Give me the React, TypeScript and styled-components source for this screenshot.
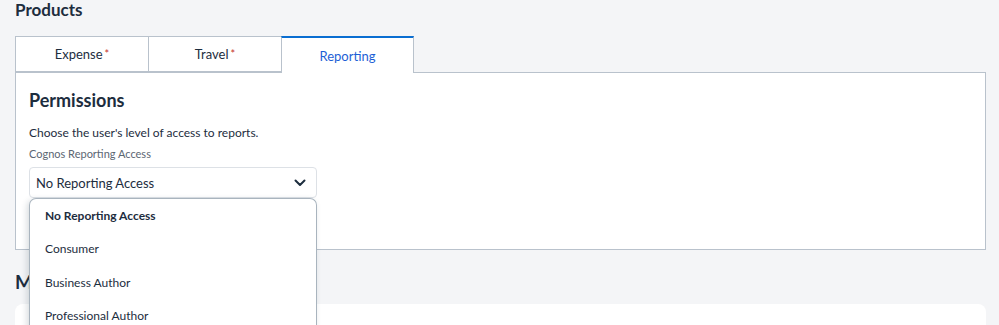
import React from "react";
import styled, { createGlobalStyle } from "styled-components";

const Global = createGlobalStyle`
  html, body { margin: 0; padding: 0; background: #f4f5f7; }
  body { font-family: Lato, "Liberation Sans", sans-serif; color: #1d2d3e; }
`;

const Page = styled.div`
  padding: 0 13px 0 15px;
  height: 325px;
  overflow: hidden;
`;

const SectionTitle = styled.h2<{ $top?: number; $size?: number }>`
  margin: 0;
  padding-top: ${(p) => p.$top ?? 0}px;
  font-size: ${(p) => p.$size ?? 17}px;
  line-height: 20px;
  font-weight: 700;
  color: #1d2d3e;
`;

const Tabs = styled.div`
  display: flex;
  margin-top: 16px;
  position: relative;
  z-index: 1;
`;

const Tab = styled.div<{ $active?: boolean }>`
  width: 134px;
  box-sizing: border-box;
  height: ${(p) => (p.$active ? 37 : 36)}px;
  margin-left: -1px;
  &:first-child { margin-left: 0; }
  &:last-child { width: 133px; }
  display: flex;
  align-items: center;
  justify-content: center;
  background: #fff;
  border: 1px solid #b9c2cc;
  border-top: ${(p) => (p.$active ? "2px solid #0a6ed1" : "1px solid #b9c2cc")};
  border-bottom: ${(p) => (p.$active ? "none" : "1px solid #b9c2cc")};
  font-size: 13px;
  color: ${(p) => (p.$active ? "#1d5fd6" : "#1d2d3e")};
`;

const Req = styled.span`
  color: #c6302a;
  font-size: 11px;
  margin-left: 2px;
  align-self: flex-start;
  margin-top: 10px;
`;

const Panel = styled.div`
  margin-top: -1px;
  background: #fff;
  border: 1px solid #b9c2cc;
  height: 178px;
  box-sizing: border-box;
  padding: 16px 13px 0;
`;

const PanelTitle = styled.h3`
  margin: 0;
  font-size: 18px;
  line-height: 22px;
  font-weight: 700;
  color: #1d2d3e;
`;

const Help = styled.p`
  margin: 14px 0 0;
  font-size: 12px;
  line-height: 16px;
  color: #1d2d3e;
`;

const Label = styled.div`
  margin-top: 5px;
  font-size: 11px;
  line-height: 15px;
  color: #5b6673;
`;

const Field = styled.div`
  position: relative;
  width: 288px;
  margin-top: 6px;
`;

const Select = styled.div`
  box-sizing: border-box;
  height: 31px;
  border: 1px solid #dde1e6;
  border-radius: 4px;
  display: flex;
  align-items: center;
  justify-content: space-between;
  padding: 0 10px 0 6px;
  font-size: 13px;
  color: #1d2d3e;
  background: #fff;
`;

const Menu = styled.ul`
  position: absolute;
  left: 0;
  top: 31px;
  width: 288px;
  box-sizing: border-box;
  margin: 0;
  padding: 0;
  list-style: none;
  background: #fff;
  border: 1px solid #a9b4be;
  border-bottom: none;
  border-radius: 7px 7px 0 0;
  box-shadow: -2px 2px 6px rgba(40, 60, 80, 0.18);
  z-index: 5;
`;

const Option = styled.li<{ $selected?: boolean }>`
  height: 33.3px;
  display: flex;
  align-items: center;
  padding-left: 15px;
  font-size: 12px;
  font-weight: ${(p) => (p.$selected ? 700 : 400)};
  color: #1d2d3e;
`;

const Card = styled.div`
  margin-top: 12px;
  height: 60px;
  background: #fff;
  border-radius: 8px;
`;

const Chevron = () => (
  <svg width="12" height="8" viewBox="0 0 12 8">
    <path d="M1.5 1.5 L6 6 L10.5 1.5" fill="none" stroke="#1d2d3e" strokeWidth="2" strokeLinecap="round" strokeLinejoin="round" />
  </svg>
);

export default function App() {
  return (
    <Page>
      <Global />
      <SectionTitle>Products</SectionTitle>
      <Tabs>
        <Tab>Expense<Req>*</Req></Tab>
        <Tab>Travel<Req>*</Req></Tab>
        <Tab $active>Reporting</Tab>
      </Tabs>
      <Panel>
        <PanelTitle>Permissions</PanelTitle>
        <Help>Choose the user's level of access to reports.</Help>
        <Label>Cognos Reporting Access</Label>
        <Field>
          <Select>
            No Reporting Access
            <Chevron />
          </Select>
          <Menu>
            <Option $selected>No Reporting Access</Option>
            <Option>Consumer</Option>
            <Option>Business Author</Option>
            <Option>Professional Author</Option>
          </Menu>
        </Field>
      </Panel>
      <SectionTitle $top={22} $size={19}>Miscellaneous</SectionTitle>
      <Card />
    </Page>
  );
}
